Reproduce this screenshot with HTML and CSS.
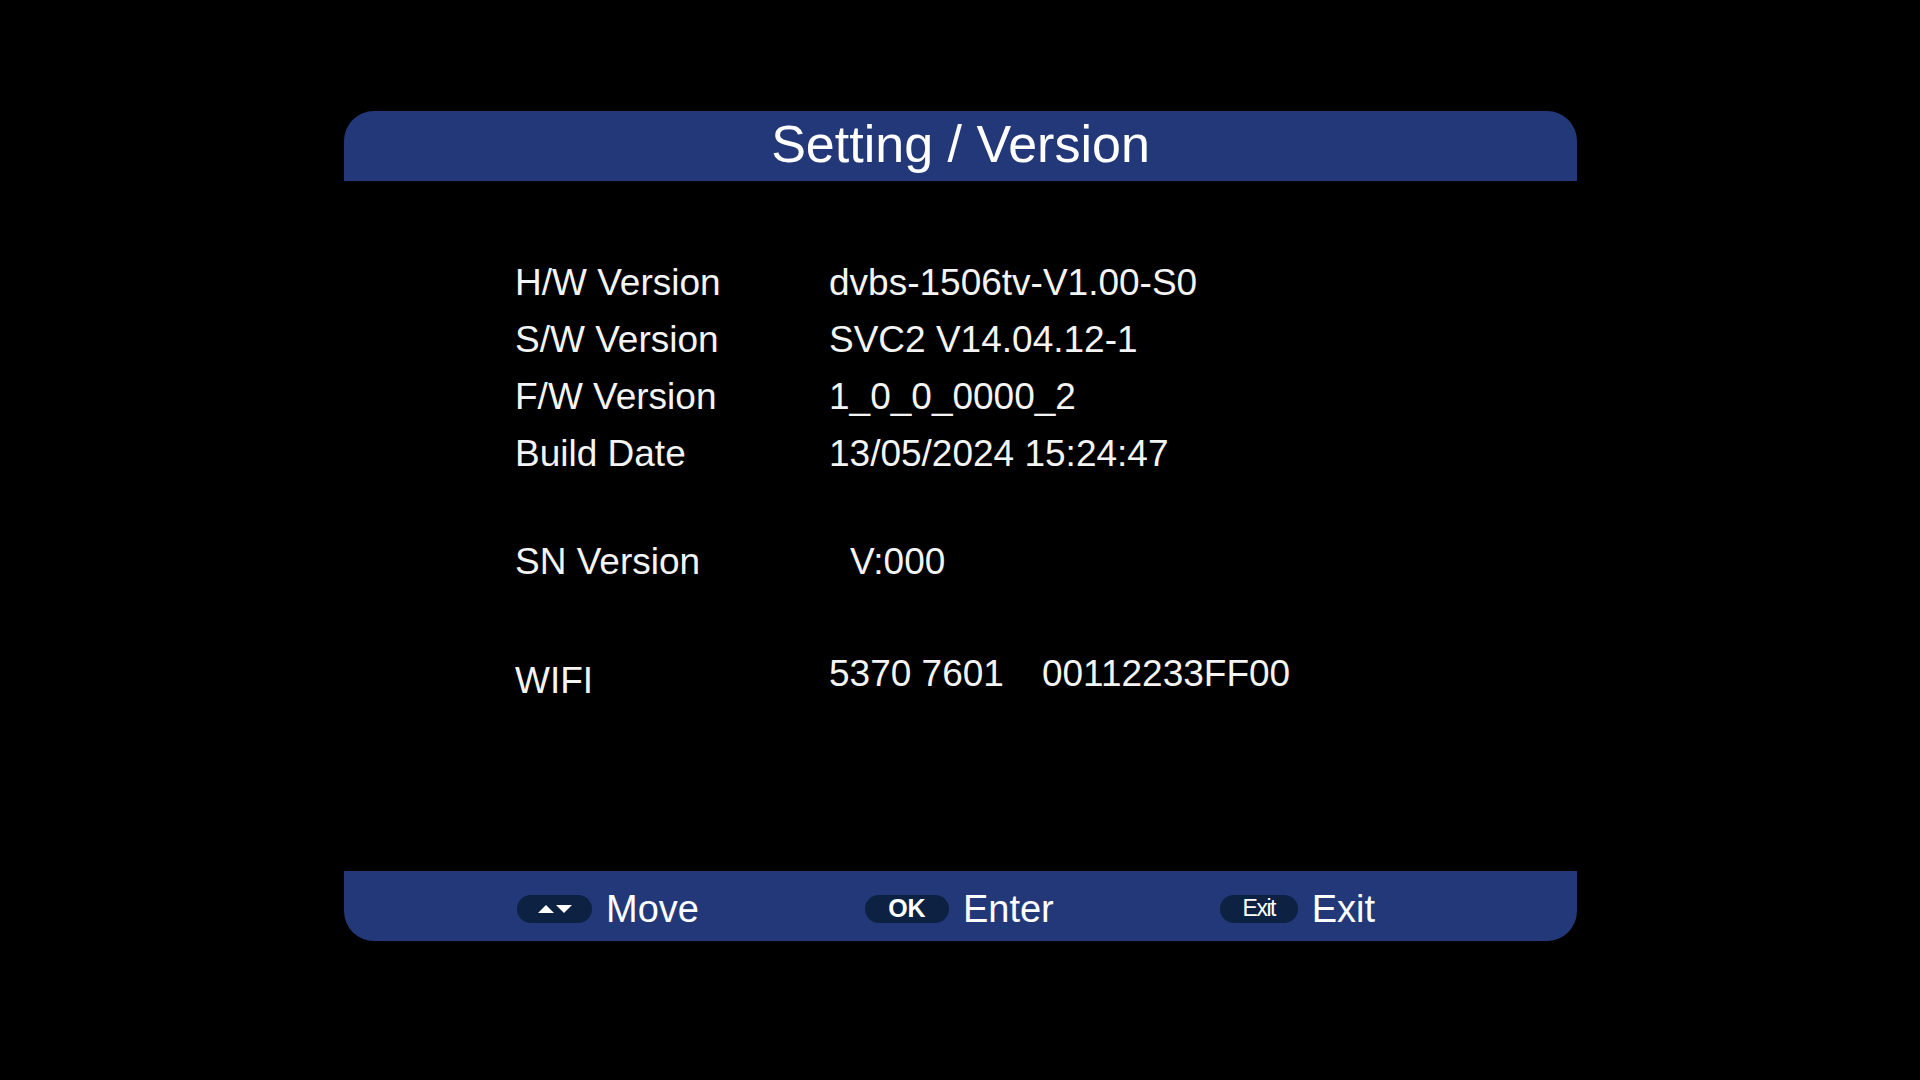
FILE: index.html
```html
<!DOCTYPE html>
<html lang="en">
<head>
  <meta charset="UTF-8" />
  <meta name="viewport" content="width=device-width, initial-scale=1.0"/>
  <title>Setting / Version</title>
  <link rel="stylesheet" href="styles.css">
</head>
<body>
  <div class="panel">
    <div class="titleBar">Setting / Version</div>

    <div class="info">
      <div class="row"><span class="label">H/W Version</span><span class="value">dvbs-1506tv-V1.00-S0</span></div>
      <div class="row"><span class="label">S/W Version</span><span class="value">SVC2 V14.04.12-1</span></div>
      <div class="row"><span class="label">F/W Version</span><span class="value">1_0_0_0000_2</span></div>
      <div class="row"><span class="label">Build Date</span><span class="value">13/05/2024 15:24:47</span></div>

      <div class="row sn"><span class="label">SN Version</span><span class="value indent">V:000</span></div>

      <div class="row wifi">
        <span class="label">WIFI</span>
        <span class="value"><span>5370 7601</span><span class="mac">00112233FF00</span></span>
      </div>
    </div>

    <div class="helpBar">
      <div class="hint">
        <span class="key">
          <svg width="36" height="10" viewBox="0 0 36 10">
            <polygon points="1,9 9,1 17,9" fill="#fff"/>
            <polygon points="19,1 35,1 27,9" fill="#fff"/>
          </svg>
        </span>
        <span class="hintText">Move</span>
      </div>
      <div class="hint">
        <span class="key keyOk">OK</span>
        <span class="hintText">Enter</span>
      </div>
      <div class="hint">
        <span class="key keyExit">Exit</span>
        <span class="hintText">Exit</span>
      </div>
    </div>
  </div>
</body>
</html>
```

FILE: styles.css
```css
body {
  margin: 0;
  background: #000;
  color: #fff;
  font-family: 'Liberation Sans', Arial, sans-serif;
  width: 1920px;
  height: 1080px;
  overflow: hidden;
}

.panel {
  width: 1233px;
  margin: 111px 0 0 344px;
  display: flex;
  flex-direction: column;
}

.titleBar {
  height: 70px;
  background: #233879;
  border-radius: 30px 30px 0 0;
  text-align: center;
  font-size: 52px;
  line-height: 67px;
  color: #fff;
}

/* version table */
.info {
  height: 690px;
  box-sizing: border-box;
  padding: 73px 0 0 171px;
}

.row {
  display: flex;
  align-items: flex-start;
  font-size: 37px;
  line-height: 57px;
  color: #f4f4f4;
}

.label {
  width: 314px;
  flex: none;
}

.value.indent {
  padding-left: 21px;
}

.row.sn {
  margin-top: 51px;
}

.row.wifi {
  margin-top: 62px;
}

.row.wifi .value {
  margin-top: -7px;
}

.mac {
  margin-left: 38px;
}

/* remote key hints */
.helpBar {
  height: 70px;
  background: #233879;
  border-radius: 0 0 30px 30px;
  display: flex;
  align-items: center;
  padding-left: 173px;
  gap: 166px;
}

.hint {
  display: flex;
  align-items: center;
  gap: 14px;
  margin-top: 5px;
}

.key {
  width: 75px;
  height: 28px;
  border-radius: 14px;
  background: #0d2142;
  display: flex;
  align-items: center;
  justify-content: center;
  color: #fff;
}

.keyOk {
  width: 84px;
  font-size: 25px;
  font-weight: bold;
}

.keyExit {
  width: 78px;
  font-size: 23px;
  letter-spacing: -1.5px;
}

.hintText {
  font-size: 38px;
  line-height: 40px;
  color: #fff;
}
```
